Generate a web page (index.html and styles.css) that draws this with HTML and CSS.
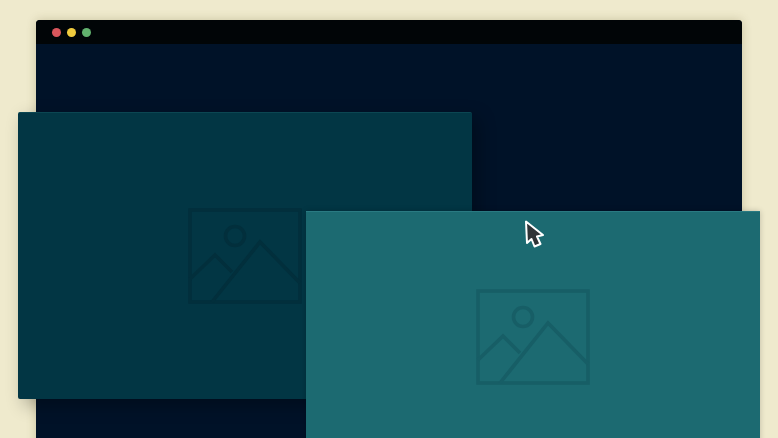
FILE: index.html
```html
<!DOCTYPE html>
<html lang="en">
<head>
<meta charset="utf-8">
<title>Windows</title>
<link rel="stylesheet" href="styles.css">
</head>
<body>
<main class="desktop">
  <section class="browser">
    <header class="titlebar">
      <span class="dot dot-red"></span>
      <span class="dot dot-yellow"></span>
      <span class="dot dot-green"></span>
    </header>
  </section>
  <section class="card card-back">
    <svg class="picture" viewBox="0 0 114 96" fill="none" stroke-width="3.6">
      <rect x="2" y="2" width="110" height="92"/>
      <circle cx="47" cy="28" r="9.5"/>
      <path d="M2 71 L27 47 L44 64"/>
      <path d="M24 94 L72 34 L112 75"/>
    </svg>
  </section>
  <section class="card card-front">
    <svg class="picture" viewBox="0 0 114 96" fill="none" stroke-width="3.6">
      <rect x="2" y="2" width="110" height="92"/>
      <circle cx="47" cy="28" r="9.5"/>
      <path d="M2 71 L27 47 L44 64"/>
      <path d="M24 94 L72 34 L112 75"/>
    </svg>
  </section>
  <svg class="cursor" viewBox="0 0 20 28">
    <path d="M2 1.5 L3 23 L7.5 19 L10.5 26.5 L16.5 24 L13 16.5 L19 15 Z" fill="#2f3336" stroke="#fff" stroke-width="2" stroke-linejoin="round"/>
  </svg>
</main>
</body>
</html>
```
FILE: styles.css
```css
html, body {
  margin: 0;
  height: 100%;
  overflow: hidden;
  background: #efeacd;
}

.desktop {
  position: relative;
  width: 778px;
  height: 438px;
  overflow: hidden;
}

.browser {
  position: absolute;
  left: 36px;
  top: 20px;
  width: 706px;
  height: 440px;
  border-radius: 4px 4px 0 0;
  background: #001228;
  box-shadow: 0 0 10px rgba(90, 80, 30, 0.25);
  overflow: hidden;
}

.titlebar {
  display: flex;
  align-items: center;
  gap: 6px;
  height: 24px;
  padding-left: 15.5px;
  background: #010507;
}

.dot {
  width: 9px;
  height: 9px;
  border-radius: 50%;
}

.dot-red { background: #d9565c; }
.dot-yellow { background: #f0cb3e; }
.dot-green { background: #62b26e; }

.card {
  position: absolute;
  width: 454px;
  height: 287px;
  display: flex;
  justify-content: center;
  align-items: flex-start;
  box-sizing: border-box;
}

.card-back {
  left: 18px;
  top: 112px;
  padding-top: 95px;
  border-radius: 2px;
  border-top: 1px solid #0b4652;
  background: #023644;
  box-shadow: 6px 6px 18px rgba(0, 0, 0, 0.3);
  stroke: #022f3c;
}

.card-front {
  left: 306px;
  top: 211px;
  padding-top: 77px;
  border-top: 1px solid #2a7a82;
  background: #1c6a71;
  box-shadow: 0 0 6px rgba(0, 0, 0, 0.2);
  stroke: #175e66;
}

.picture {
  width: 114px;
  height: 96px;
}

.cursor {
  position: absolute;
  left: 524px;
  top: 220px;
  width: 20px;
  height: 28px;
}
```
